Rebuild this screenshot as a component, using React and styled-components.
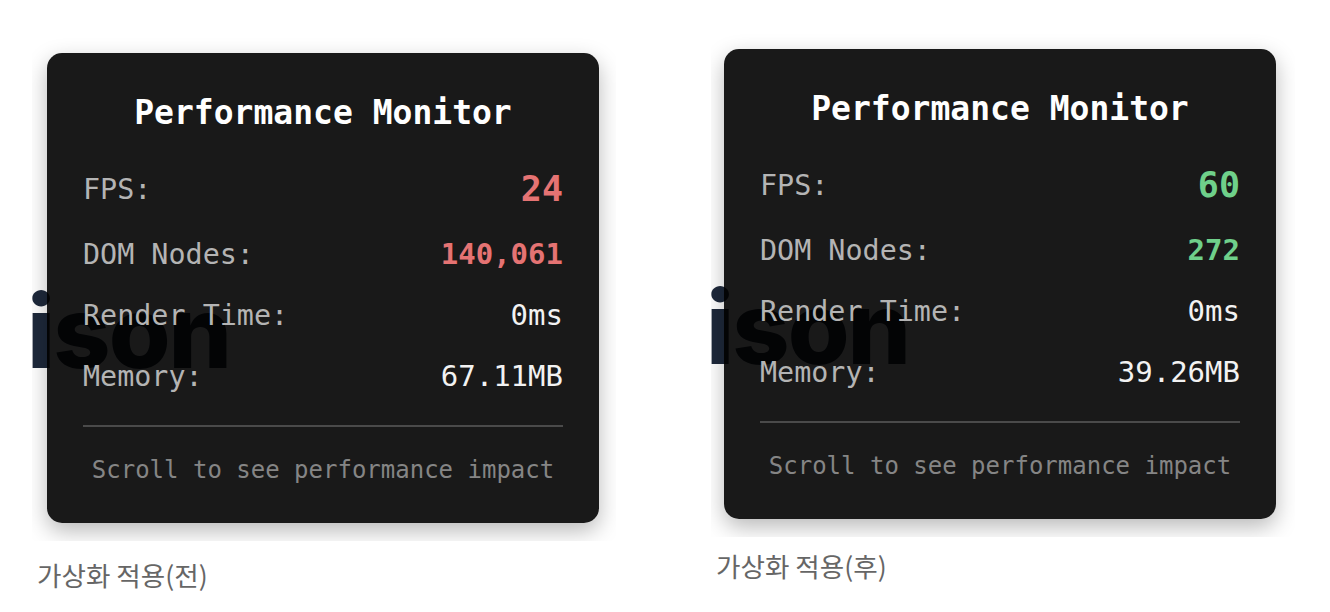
import React from 'react';
import styled, { createGlobalStyle } from 'styled-components';

const GlobalStyle = createGlobalStyle`
  html, body {
    margin: 0;
    padding: 0;
    background: #ffffff;
  }
`;

const mono = `"DejaVu Sans Mono", "Liberation Mono", monospace`;

const Page = styled.div`
  display: flex;
  align-items: flex-start;
  gap: 95px;
  padding-left: 32px;
`;

const Figure = styled.div`
  display: flex;
  flex-direction: column;
  width: 584px;
  margin-top: ${p => p.$top}px;
`;

const Frame = styled.div`
  position: relative;
  overflow: hidden;
  padding: 15px 17px 18px ${p => p.$pad}px;
  background: #ffffff;
`;

// the page heading that sits behind the translucent monitor card
const Backdrop = styled.div`
  position: absolute;
  left: -5px;
  top: 244px;
  font-family: Inter, "Liberation Sans", sans-serif;
  font-weight: 800;
  font-size: 100px;
  line-height: 100px;
  letter-spacing: -2px;
  color: #1e293b;
  white-space: nowrap;
`;

const Card = styled.div`
  position: relative;
  width: 552px;
  box-sizing: border-box;
  padding: 40px 36px 38px;
  background: rgba(0, 0, 0, 0.9);
  border-radius: 15px;
  box-shadow: 0 8px 22px rgba(0, 0, 0, 0.28);
  font-family: ${mono};
`;

const Title = styled.div`
  text-align: center;
  color: #ffffff;
  font-weight: bold;
  font-size: 33px;
  line-height: 40px;
  margin-bottom: 35px;
`;

const Rows = styled.div`
  display: flex;
  flex-direction: column;
  gap: 26px;
`;

const Row = styled.div`
  display: flex;
  justify-content: space-between;
  align-items: center;
`;

const Label = styled.span`
  color: #b4b4b4;
  font-size: 28.4px;
  line-height: 35px;
`;

const Value = styled.span`
  color: ${p => p.$color || '#f2f2f2'};
  font-size: ${p => (p.$big ? 35 : 29)}px;
  line-height: ${p => (p.$big ? 43 : 35)}px;
  font-weight: ${p => (p.$bold ? 'bold' : 'normal')};
`;

const Footer = styled.div`
  margin-top: 31px;
  padding-top: 29px;
  border-top: 2px solid #4a4a4a;
  text-align: center;
  color: #858585;
  font-size: 24px;
  line-height: 29px;
`;

const Caption = styled.div`
  margin-top: ${p => p.$gap}px;
  padding-left: 5px;
  font-family: "Noto Sans CJK KR", "Noto Sans", sans-serif;
  font-size: 26.6px;
  line-height: 34px;
  color: #666666;
`;

const RED = '#e57373';
const GREEN = '#6fd08a';

const snapshots = [
  {
    key: 'before',
    top: 38,
    pad: 15,
    gap: 17,
    caption: '가상화 적용(전)',
    tone: RED,
    fps: 24,
    nodes: '140,061',
    render: '0ms',
    memory: '67.11MB',
  },
  {
    key: 'after',
    top: 34,
    pad: 13,
    gap: 12,
    caption: '가상화 적용(후)',
    tone: GREEN,
    fps: 60,
    nodes: '272',
    render: '0ms',
    memory: '39.26MB',
  },
];

const Monitor = ({ data }) => (
  <Card>
    <Title>Performance Monitor</Title>
    <Rows>
      <Row>
        <Label>FPS:</Label>
        <Value $big $bold $color={data.tone}>{data.fps}</Value>
      </Row>
      <Row>
        <Label>DOM Nodes:</Label>
        <Value $bold $color={data.tone}>{data.nodes}</Value>
      </Row>
      <Row>
        <Label>Render Time:</Label>
        <Value>{data.render}</Value>
      </Row>
      <Row>
        <Label>Memory:</Label>
        <Value>{data.memory}</Value>
      </Row>
    </Rows>
    <Footer>Scroll to see performance impact</Footer>
  </Card>
);

export default function App() {
  return (
    <>
      <GlobalStyle />
      <Page>
        {snapshots.map(s => (
          <Figure key={s.key} $top={s.top}>
            <Frame $pad={s.pad}>
              <Backdrop>ison</Backdrop>
              <Monitor data={s} />
            </Frame>
            <Caption $gap={s.gap}>{s.caption}</Caption>
          </Figure>
        ))}
      </Page>
    </>
  );
}
